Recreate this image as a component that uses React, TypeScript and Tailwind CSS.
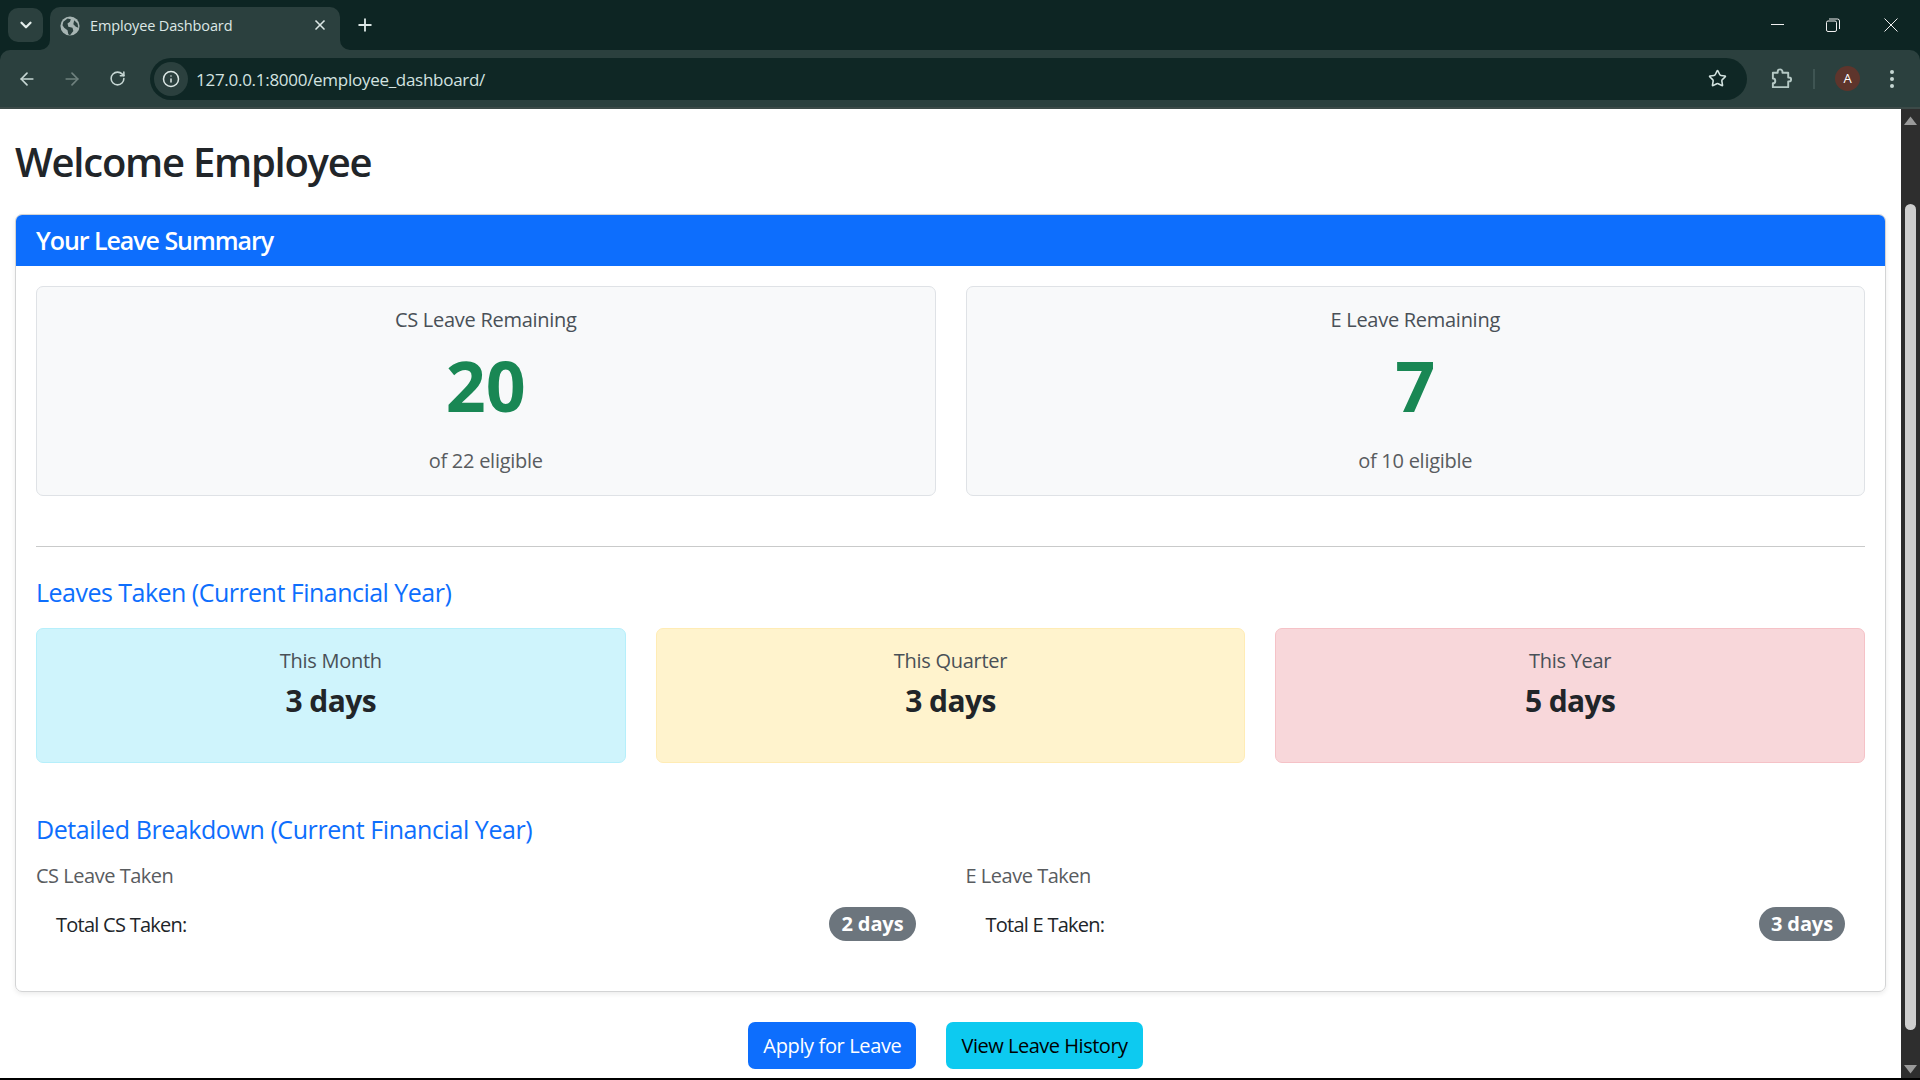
import { ArrowLeft, ArrowRight, ChevronDown, Info, Plus, RotateCw, Star, X } from "lucide-react";

function Stat({ title, value, sub }: { title: string; value: string; sub: string }) {
  return (
    <div className="h-[210px] rounded-[7px] border border-[#dfe2e6] bg-[#f8f9fa] pt-[21px] text-center">
      <div className="mb-[11px] text-[20px] leading-[24px] font-medium tracking-[-0.28px] text-[#495057]">{title}</div>
      <div className="mb-[19px] text-[70px] leading-[84px] font-bold text-[#198754]">{value}</div>
      <div className="text-[20px] leading-[30px] tracking-[-0.26px] text-[#595c5f]">{sub}</div>
    </div>
  );
}

function Box({ title, value, bg, border }: { title: string; value: string; bg: string; border: string }) {
  return (
    <div className={`h-[135px] rounded-[7px] border pt-[20px] text-center ${bg} ${border}`}>
      <div className="mb-[10px] text-[20px] leading-[24px] font-medium tracking-[-0.28px] text-[#495057]">{title}</div>
      <div className="text-[30px] leading-[36px] font-bold tracking-[-0.6px] text-[#212529]">{value}</div>
    </div>
  );
}

function Breakdown({ heading, label, value }: { heading: string; label: string; value: string }) {
  return (
    <div>
      <div className="mb-[10px] text-[20px] leading-[24px] font-medium tracking-[-0.48px] text-[#595c5f]">{heading}</div>
      <div className="flex h-[52px] items-center justify-between px-[20px]">
        <span className="relative top-[1px] text-[20px] tracking-[-0.74px] text-[#212529]">{label}</span>
        <span className="flex h-[34px] items-center rounded-full bg-[#6c757d] px-[12px] text-[20px] font-bold tracking-[-0.1px] text-white">{value}</span>
      </div>
    </div>
  );
}

function Browser() {
  return (
    <div className="shrink-0 bg-[#0d2523] text-[#c6d6d3]">
      <div className="flex h-[50px] items-end">
        <div className="mb-[8px] ml-[8px] flex h-[34px] w-[35px] items-center justify-center rounded-[10px] bg-[#2b403e]">
          <ChevronDown size={18} strokeWidth={3} className="text-[#e4eeec]" />
        </div>
        <div className="relative ml-[7px] flex h-[43px] w-[290px] items-center rounded-t-[10px] bg-[#2b403e] pb-[6px]">
          <svg viewBox="0 0 10 10" className="absolute bottom-0 left-[-10px] h-[10px] w-[10px]"><path d="M10 0v10H0a10 10 0 0 0 10-10z" fill="#2b403e" /></svg>
          <svg viewBox="0 0 10 10" className="absolute right-[-10px] bottom-0 h-[10px] w-[10px]"><path d="M0 0v10h10A10 10 0 0 1 0 0z" fill="#2b403e" /></svg>
          <svg viewBox="0 0 24 24" className="ml-[10px] h-[20px] w-[20px]">
            <circle cx="12" cy="12" r="11.5" fill="#a7b5b3" />
            <path d="M4 7l5-4 4 1-1 3-3 2 1 4 5 1 1 4-4 5-2-1-1-5-4-3-2-3zM17 5l4 4 1 5-3-1-3-3z" fill="#2b403e" />
          </svg>
          <span className="ml-[10px] text-[14.5px] tracking-[-0.14px] text-[#dce7e5]">Employee Dashboard</span>
          <X size={16} strokeWidth={2.5} className="absolute top-[10px] right-[12px] text-[#dce7e5]" />
        </div>
        <Plus size={20} strokeWidth={2.2} className="mb-[15px] ml-[15px] text-[#dce7e5]" />
        <div className="flex-1" />
        <div className="mb-[18px] flex items-center text-[#f0f0f0]">
          <svg width="14" height="14" viewBox="0 0 14 14" className="mr-[41px]"><path d="M0 6.5h13" stroke="currentColor" /></svg>
          <svg width="14" height="14" viewBox="0 0 14 14" className="mr-[44px]">
            <rect x="0.5" y="3" width="10" height="10.5" rx="1.5" fill="none" stroke="currentColor" />
            <path d="M3 1h8.5a2 2 0 0 1 2 2v8" fill="none" stroke="currentColor" />
          </svg>
          <svg width="14" height="14" viewBox="0 0 14 14" className="mr-[22px]"><path d="M0.5 0.5l13 13M13.5 0.5l-13 13" stroke="currentColor" /></svg>
        </div>
      </div>
      <div className="flex h-[59px] items-center rounded-t-[10px] border-b-2 border-[#3c4a48] bg-[#2b403e]">
        <ArrowLeft size={20} strokeWidth={2} className="ml-[17px] text-[#c6d6d3]" />
        <ArrowRight size={20} strokeWidth={2} className="ml-[25px] text-[#6f817e]" />
        <RotateCw size={17} strokeWidth={2.2} className="ml-[27px] text-[#c6d6d3]" />
        <div className="ml-[24px] flex h-[42px] flex-1 items-center rounded-full bg-[#0f2725]">
          <div className="ml-[4px] flex h-[34px] w-[34px] items-center justify-center rounded-full bg-[#2b403e]">
            <Info size={18} strokeWidth={2} className="text-[#dce7e5]" />
          </div>
          <span className="relative top-[1px] ml-[8px] text-[17px] tracking-[-0.28px] text-[#d3e3e0]">127.0.0.1:8000/employee_dashboard/</span>
          <div className="flex-1" />
          <Star size={19} strokeWidth={2} className="mr-[20px] text-[#d3e3e0]" />
        </div>
        <svg viewBox="0 0 24 24" className="ml-[23px] h-[23px] w-[23px] text-[#b5c9c5]" fill="none" stroke="currentColor" strokeWidth="2">
          <path d="M3 6h5V5a2.5 2.5 0 0 1 5 0v1h6v5h1a2 2 0 0 1 0 4h-1v6H3v-4a2.5 2.5 0 0 0 0-5z" strokeLinejoin="round" />
        </svg>
        <div className="ml-[20px] h-[20px] w-[2px] bg-[#3f5553]" />
        <div className="ml-[20px] flex h-[25px] w-[25px] items-center justify-center rounded-full bg-[#5e352c] text-[13px] text-white">A</div>
        <div className="mr-[26px] ml-[30px] flex flex-col gap-[3px]">
          <i className="h-[4px] w-[4px] rounded-full bg-[#c6d6d3]" />
          <i className="h-[4px] w-[4px] rounded-full bg-[#c6d6d3]" />
          <i className="h-[4px] w-[4px] rounded-full bg-[#c6d6d3]" />
        </div>
      </div>
    </div>
  );
}

function Scrollbar() {
  return (
    <div className="flex w-[19px] shrink-0 flex-col items-center bg-[#2e2e2e]">
      <svg width="13" height="9" viewBox="0 0 13 9" className="mt-[7px]"><path d="M6.5 0.5L13 9H0z" fill="#9a9a9a" /></svg>
      <div className="mt-[79px] h-[826px] w-[11px] rounded-full bg-[#cfcfcf]" />
      <div className="flex-1" />
      <svg width="13" height="9" viewBox="0 0 13 9" className="mb-[4px]"><path d="M6.5 8.5L13 0H0z" fill="#9a9a9a" /></svg>
    </div>
  );
}

export default function App() {
  return (
    <div className="flex h-screen flex-col overflow-hidden bg-white font-['Open_Sans',sans-serif] text-[#212529]">
      <Browser />
      <div className="flex min-h-0 flex-1 border-b-2 border-black">
        <main className="min-w-0 flex-1 overflow-hidden px-[15px] pt-[29px]">
          <h1 className="mb-[28px] text-[40px] leading-[48px] font-semibold tracking-[-1.25px]">Welcome Employee</h1>
          <section className="overflow-hidden rounded-[7px] border border-[#d3d4d5] shadow-[0_2px_5px_rgba(0,0,0,0.08)]">
            <div className="h-[51px] bg-[#0d6efd] px-[20px] text-[25px] leading-[51px] font-semibold tracking-[-1.05px] text-white">Your Leave Summary</div>
            <div className="p-[20px] pb-[21px]">
              <div className="grid grid-cols-2 gap-[30px]">
                <Stat title="CS Leave Remaining" value="20" sub="of 22 eligible" />
                <Stat title="E Leave Remaining" value="7" sub="of 10 eligible" />
              </div>
              <hr className="mt-[50px] mb-[30px] border-[#c9caca]" />
              <h2 className="mb-[21px] text-[25px] leading-[30px] font-medium tracking-[-0.52px] text-[#0d6efd]">Leaves Taken (Current Financial Year)</h2>
              <div className="grid grid-cols-3 gap-[30px]">
                <Box title="This Month" value="3 days" bg="bg-[#cff4fc]" border="border-[#b6effb]" />
                <Box title="This Quarter" value="3 days" bg="bg-[#fff3cd]" border="border-[#ffecb5]" />
                <Box title="This Year" value="5 days" bg="bg-[#f8d7da]" border="border-[#f5c2c7]" />
              </div>
              <h2 className="mt-[51px] mb-[20px] text-[25px] leading-[30px] font-medium tracking-[-0.42px] text-[#0d6efd]">Detailed Breakdown (Current Financial Year)</h2>
              <div className="grid grid-cols-2 gap-[30px] pb-[20px]">
                <Breakdown heading="CS Leave Taken" label="Total CS Taken:" value="2 days" />
                <Breakdown heading="E Leave Taken" label="Total E Taken:" value="3 days" />
              </div>
            </div>
          </section>
          <div className="mt-[30px] flex justify-center gap-[30px] pr-[10px]">
            <button className="h-[47px] rounded-[7px] bg-[#0d6efd] px-[15px] text-[20px] tracking-[-0.36px] text-white">Apply for Leave</button>
            <button className="h-[47px] rounded-[7px] bg-[#0dcaf0] px-[15px] text-[20px] tracking-[-0.48px] text-black">View Leave History</button>
          </div>
        </main>
        <Scrollbar />
      </div>
    </div>
  );
}
